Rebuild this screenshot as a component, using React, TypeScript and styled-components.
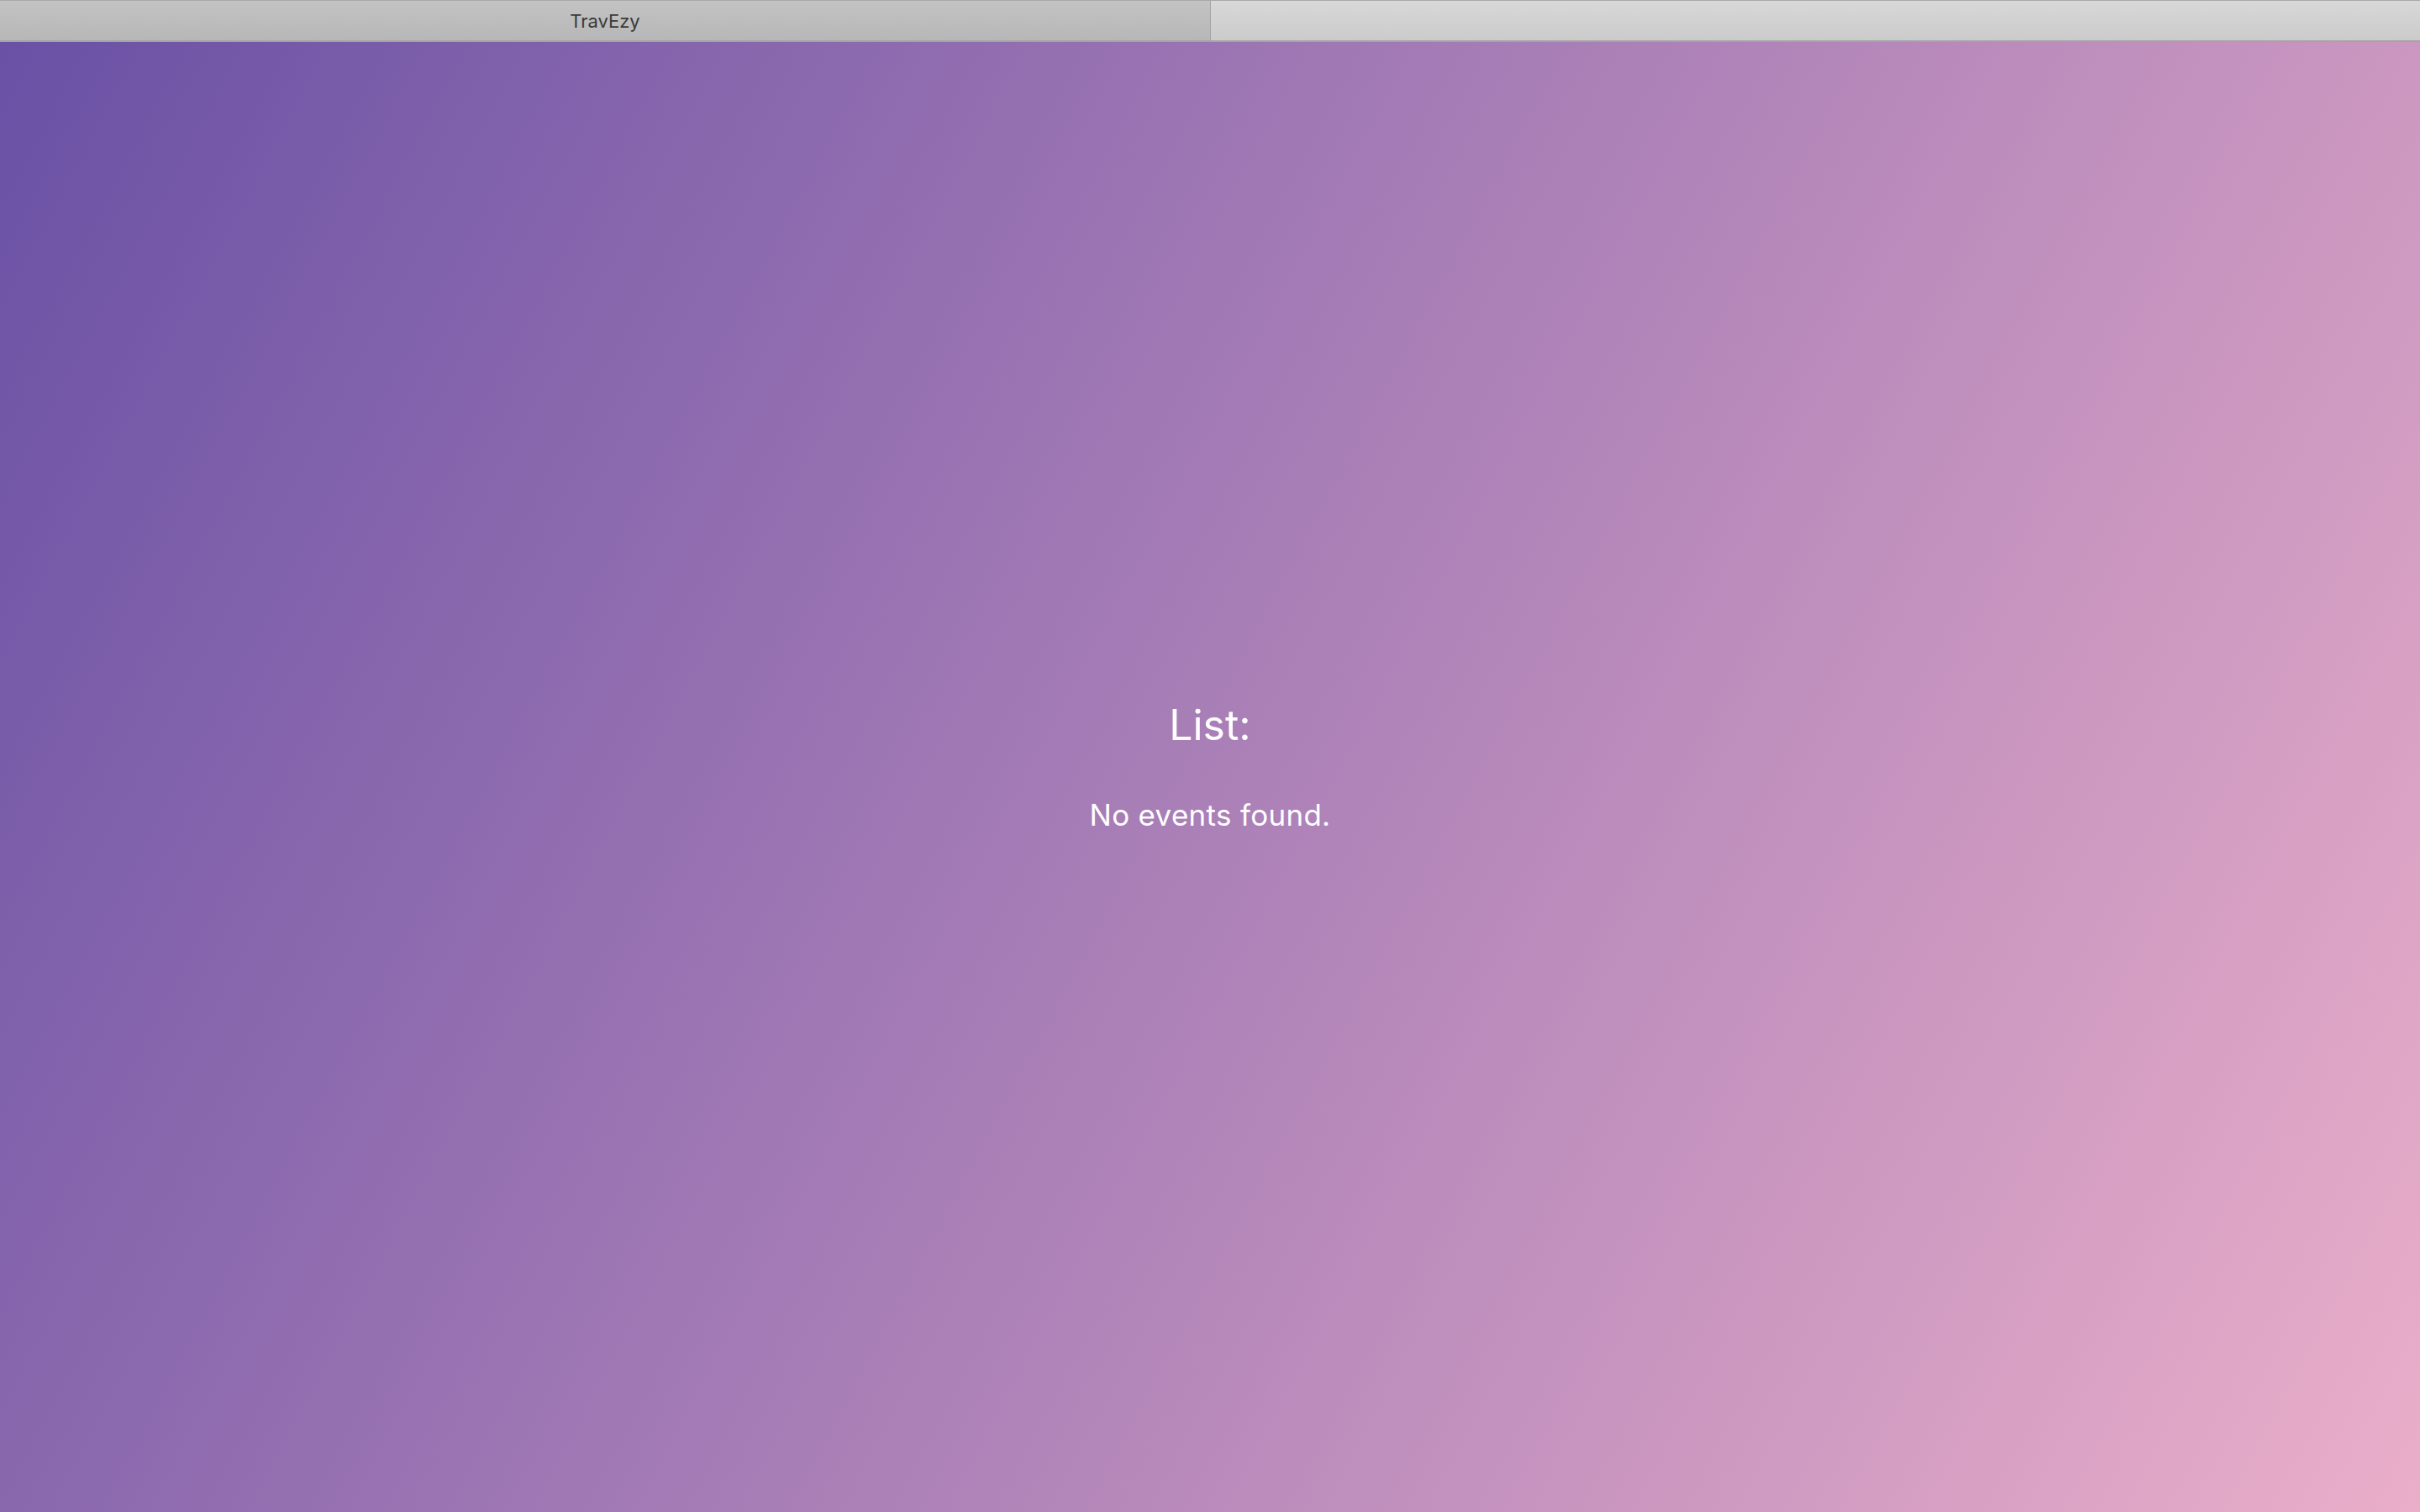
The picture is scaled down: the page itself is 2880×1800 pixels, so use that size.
import React from "react";
import styled, { createGlobalStyle } from "styled-components";

const GlobalStyle = createGlobalStyle`
  html, body {
    margin: 0;
    padding: 0;
    height: 100%;
  }
  body {
    font-family: Inter, "Liberation Sans", sans-serif;
    -webkit-font-smoothing: antialiased;
  }
  #root {
    height: 100%;
  }
`;

const Window = styled.div`
  height: 100vh;
  display: flex;
  flex-direction: column;
  overflow: hidden;
`;

const TabBar = styled.div`
  height: 50px;
  flex: 0 0 50px;
  box-sizing: border-box;
  display: grid;
  grid-template-columns: 1fr 1fr;
  border-top: 1px solid #a9a9a9;
  border-bottom: 2px solid #a4a4a4;
`;

const Tab = styled.div<{ $active?: boolean }>`
  display: flex;
  align-items: center;
  justify-content: center;
  font-family: Inter, "Liberation Sans", sans-serif;
  font-size: 22px;
  color: #3a3a3a;
  background: ${(p) =>
    p.$active
      ? "linear-gradient(to bottom, #c3c3c3, #b7b7b7)"
      : "linear-gradient(to bottom, #d8d8d8, #cbcbcb)"};
  & + & {
    border-left: 1px solid #a3a3a3;
  }
`;

const Content = styled.main`
  flex: 1;
  display: flex;
  flex-direction: column;
  align-items: center;
  justify-content: center;
  padding-bottom: 26px;
  background: linear-gradient(118deg, #6a51a5 0%, #eaaec9 100%);
  color: #ffffff;
`;

const Heading = styled.h2`
  margin: 0;
  font-family: Inter, "Liberation Sans", sans-serif;
  font-weight: 400;
  font-size: 50px;
  line-height: normal;
`;

const Message = styled.p`
  margin: 56px 0 0;
  font-family: Inter, "Liberation Sans", sans-serif;
  font-weight: 400;
  font-size: 35px;
  line-height: normal;
  letter-spacing: 0.3px;
`;

export default function App() {
  return (
    <>
      <GlobalStyle />
      <Window>
        <TabBar>
          <Tab $active>TravEzy</Tab>
          <Tab />
        </TabBar>
        <Content>
          <Heading>List:</Heading>
          <Message>No events found.</Message>
        </Content>
      </Window>
    </>
  );
}
